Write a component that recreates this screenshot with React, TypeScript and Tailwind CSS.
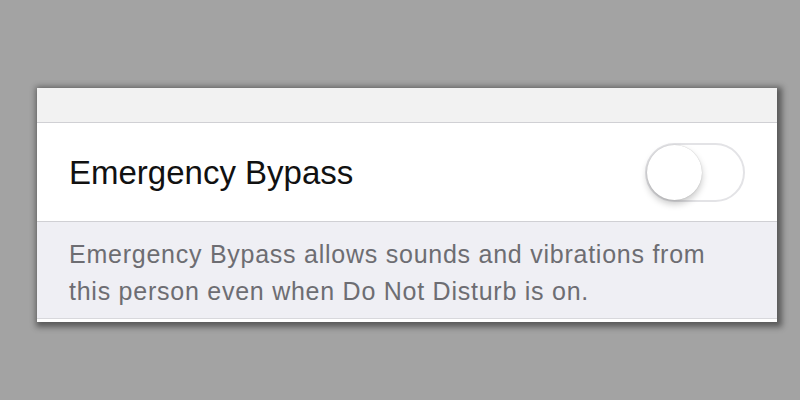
export default function App() {
  return (
    <div className="h-[400px] w-[800px] overflow-hidden bg-[#a3a3a3] pt-[88px] pl-[37px] font-['Liberation_Sans',Arial,sans-serif]">
      <div className="w-[740px] bg-white shadow-[2px_2px_6px_3px_rgba(0,0,0,0.45)]">
        {/* top grouped band */}
        <div className="h-[35px] border-b border-[#d0d0d4] bg-[#f2f2f2]" />

        {/* switch row */}
        <div className="flex h-[99px] items-center justify-between border-b border-[#d0d0d4] pl-[32px] pr-[32px]">
          <span className="text-[33px] leading-[49px] text-[#111]">Emergency Bypass</span>
          <div className="relative h-[59px] w-[100px] rounded-full border-2 border-[#e3e3e6] bg-white">
            <div className="absolute top-[0px] left-[0px] h-[55px] w-[55px] rounded-full bg-white shadow-[0_4px_7px_rgba(0,0,0,0.22),0_0_1px_rgba(0,0,0,0.25)]" />
          </div>
        </div>

        {/* footer text */}
        <div className="bg-[#efeff4] pl-[32px] pr-[10px] pt-[14px] pb-[8px] text-[25px] leading-[37px] tracking-[0.75px] text-[#6d6d72]">
          Emergency Bypass allows sounds and vibrations from
          <br />
          this person even when Do Not Disturb is on.
        </div>
        <div className="h-[4px] border-t border-[#d8d8dc] bg-white" />
      </div>
    </div>
  );
}
